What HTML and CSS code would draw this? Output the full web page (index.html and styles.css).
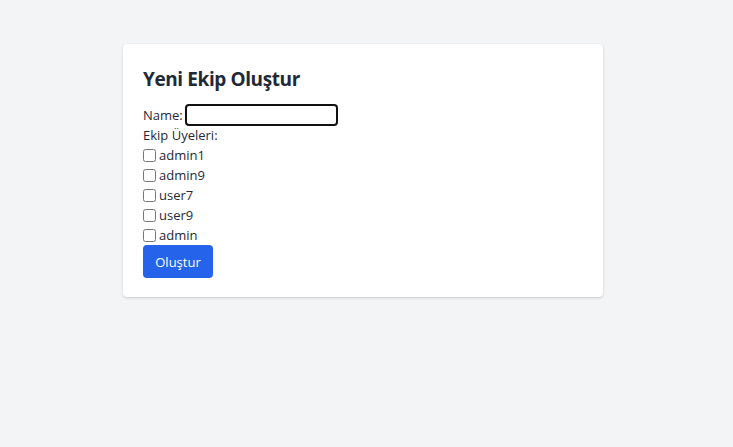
FILE: index.html
```html
<!DOCTYPE html>
<html lang="tr">
<head>
<meta charset="utf-8">
<link rel="stylesheet" href="styles.css">
</head>
<body>
<div class="page">
  <div class="card">
    <h2 class="title">Yeni Ekip Oluştur</h2>
    <form class="form">
      <div class="row"><label>Name:</label><input class="name-input" type="text"></div>
      <div class="row">Ekip Üyeleri:</div>
      <label class="row check"><input type="checkbox"><span>admin1</span></label>
      <label class="row check"><input type="checkbox"><span>admin9</span></label>
      <label class="row check"><input type="checkbox"><span>user7</span></label>
      <label class="row check"><input type="checkbox"><span>user9</span></label>
      <label class="row check"><input type="checkbox"><span>admin</span></label>
      <button type="button" class="btn">Oluştur</button>
    </form>
  </div>
</div>
</body>
</html>
```

FILE: styles.css
```css
html, body { margin: 0; padding: 0; }
body {
  background: #f3f4f6;
  font-family: "Open Sans", "Noto Sans", sans-serif;
  color: #1f2937;
  width: 733px;
  height: 447px;
}
.page {
  padding-top: 44px;
  padding-left: 123px;
}
.card {
  width: 440px;
  padding: 20px;
  background: #fff;
  border-radius: 4px;
  box-shadow: 0 1px 3px rgba(0,0,0,0.12), 0 1px 2px rgba(0,0,0,0.06);
  height: 213px;
}
.title {
  margin: 0 0 12px;
  padding-top: 1px;
  font-size: 19px;
  letter-spacing: -0.4px;
  font-weight: 700;
  line-height: 28px;
  color: #1f2937;
}
.form { display: flex; flex-direction: column; align-items: flex-start; font-size: 13px; }
.row { height: 20px; line-height: 20px; display: flex; align-items: center; }
.name-input {
  margin: 0 0 0 2px;
  padding: 0;
  border: 2px solid #111;
  border-radius: 4px;
  box-sizing: border-box;
  height: 22px;
  width: 153px;
  outline: none;
}
.check { gap: 3px; }
.check input {
  margin: 0;
  width: 13px;
  height: 13px;
}
.btn {
  background: #2563eb;
  color: #fff;
  border: 0;
  border-radius: 4px;
  font-family: inherit;
  font-size: 13px;
  width: 70px;
  height: 33px;
  padding: 0;
}
```
